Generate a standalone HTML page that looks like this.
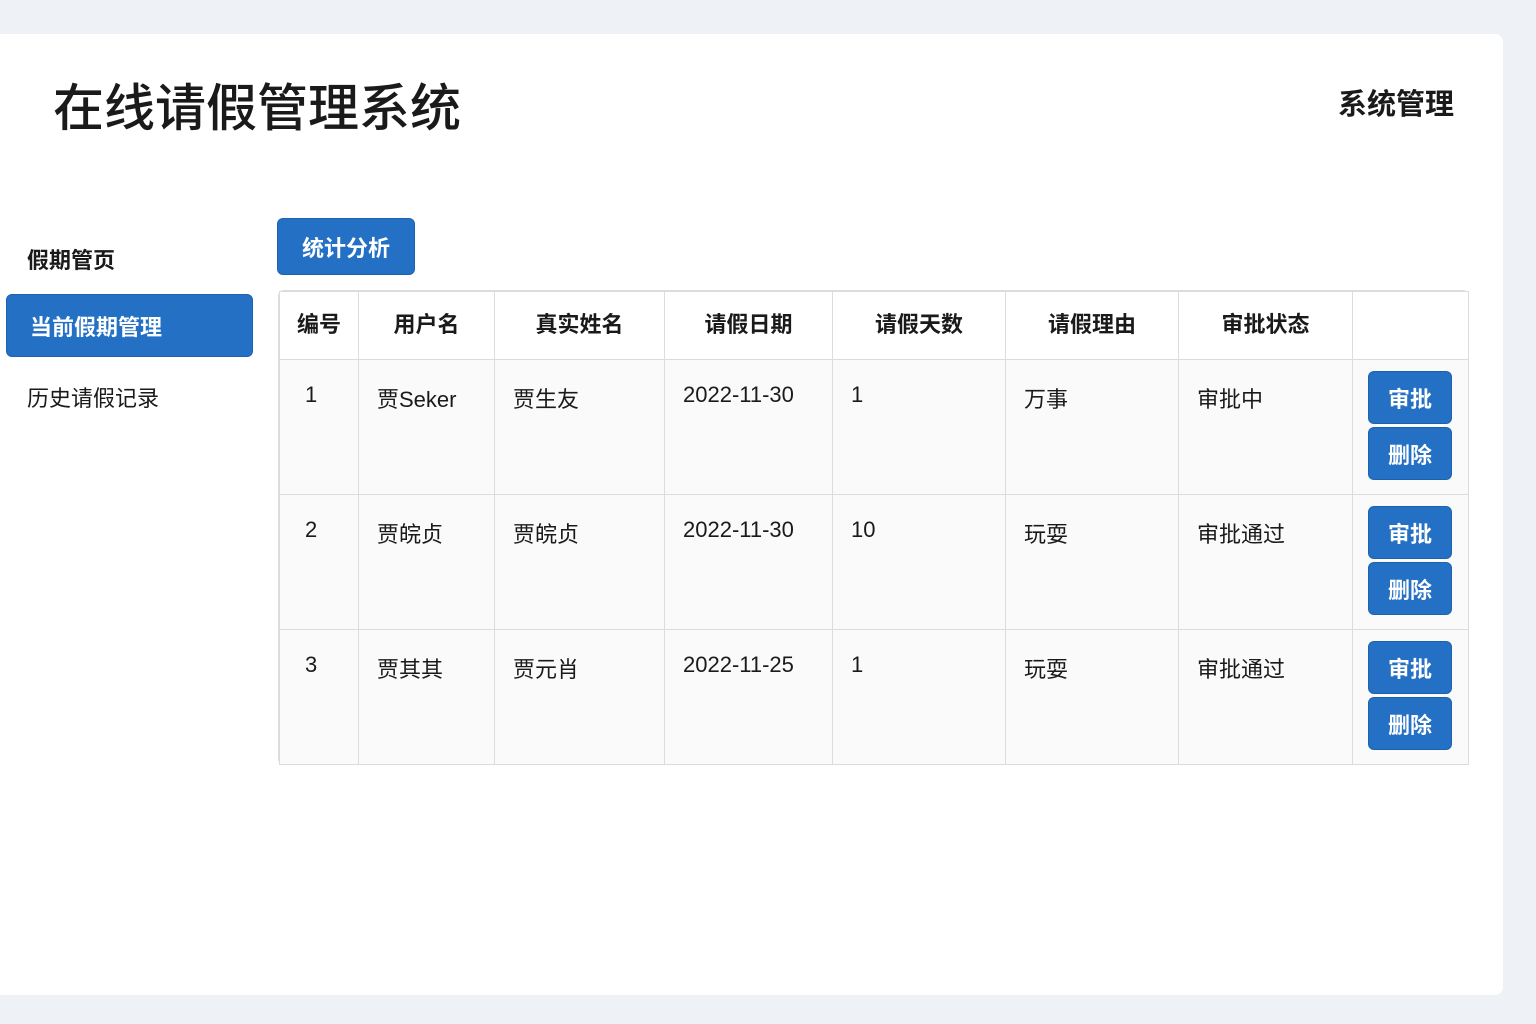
<!DOCTYPE html>
<html><head><meta charset="utf-8"><style>
*{margin:0;padding:0;box-sizing:border-box}
body{width:1536px;height:1024px;background:#eef2f7;font-family:"Liberation Sans","Noto Sans CJK SC",sans-serif;color:#1a1a1a;position:relative;overflow:hidden}
.card{position:absolute;left:0;top:34px;width:1503px;height:961px;background:#fff;border-radius:0 8px 8px 0}
.a{position:absolute;white-space:nowrap}
.btn{position:absolute;background:#2370c4;color:#fff;border-radius:6px;display:flex;align-items:center;justify-content:center;font-weight:bold;border:1px solid #1d62ae}
table{position:absolute;left:279px;top:291px;border-collapse:collapse;font-size:22px}
.wrap{position:absolute;left:278px;top:290px;width:1191px;height:475px;border:1px solid #dcdcdc;border-radius:6px}
td,th{border:1px solid #dcdcdc;vertical-align:top}
th{height:68px;font-weight:bold;vertical-align:middle;background:#fff;padding-bottom:6px}
td{height:135px;background:#fafafa;padding:22px 0 0 18px;font-weight:normal}
</style></head><body>
<div class="card"></div>
<div class="a" style="left:53px;top:67px;font-size:51px;font-weight:500">在线请假管理系统</div>
<div class="a" style="left:1338px;top:81px;font-size:29px;font-weight:bold">系统管理</div>
<div class="a" style="left:27px;top:243px;font-size:22px;font-weight:bold">假期管页</div>
<div class="btn" style="left:6px;top:294px;width:247px;height:63px;justify-content:flex-start;padding-left:23px;font-size:22px">当前假期管理</div>
<div class="a" style="left:27px;top:381px;font-size:22px">历史请假记录</div>
<div class="btn" style="left:277px;top:218px;width:138px;height:57px;font-size:22px">统计分析</div>
<div class="wrap"></div>
<table>
<colgroup><col style="width:79px"><col style="width:136px"><col style="width:170px"><col style="width:168px"><col style="width:173px"><col style="width:173px"><col style="width:174px"><col style="width:116px"></colgroup>
<tr><th>编号</th><th>用户名</th><th>真实姓名</th><th>请假日期</th><th>请假天数</th><th>请假理由</th><th>审批状态</th><th></th></tr>
<tr><td style="padding-left:25px">1</td><td>贾Seker</td><td>贾生友</td><td>2022-11-30</td><td>1</td><td>万事</td><td>审批中</td><td style="padding:0"></td></tr>
<tr><td style="padding-left:25px">2</td><td>贾皖贞</td><td>贾皖贞</td><td>2022-11-30</td><td>10</td><td>玩耍</td><td>审批通过</td><td style="padding:0"></td></tr>
<tr><td style="padding-left:25px">3</td><td>贾其其</td><td>贾元肖</td><td>2022-11-25</td><td>1</td><td>玩耍</td><td>审批通过</td><td style="padding:0"></td></tr>
</table>
<div class="btn" style="left:1368px;top:371px;width:84px;height:53px;font-size:22px">审批</div>
<div class="btn" style="left:1368px;top:427px;width:84px;height:53px;font-size:22px">删除</div>
<div class="btn" style="left:1368px;top:506px;width:84px;height:53px;font-size:22px">审批</div>
<div class="btn" style="left:1368px;top:562px;width:84px;height:53px;font-size:22px">删除</div>
<div class="btn" style="left:1368px;top:641px;width:84px;height:53px;font-size:22px">审批</div>
<div class="btn" style="left:1368px;top:697px;width:84px;height:53px;font-size:22px">删除</div>
</body></html>
